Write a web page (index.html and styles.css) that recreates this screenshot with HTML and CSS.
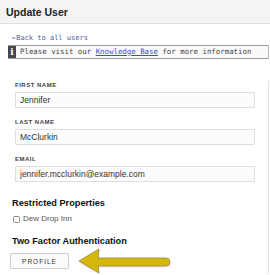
FILE: index.html
```html
<!DOCTYPE html>
<html lang="en">
<head>
    <meta charset="UTF-8">
    <meta name="viewport" content="width=device-width, initial-scale=1.0">
    <title>Update User</title>
    <link rel="stylesheet" href="styles.css">
</head>
<body>
    <div class="page-header">
        <h1>Update User</h1>
    </div>

    <div class="content">
        <a class="back-link" href="#">&larr;Back to all users</a>

        <div class="alert">
            <span class="alert-icon">i</span>
            <span class="alert-text">Please visit our <a href="#">Knowledge Base</a> for more information</span>
        </div>

        <form class="user-form">
            <div class="form-group">
                <label for="firstName">First Name</label>
                <input type="text" id="firstName" value="Jennifer">
            </div>
            <div class="form-group">
                <label for="lastName">Last Name</label>
                <input type="text" id="lastName" value="McClurkin">
            </div>
            <div class="form-group">
                <label for="email">Email</label>
                <input type="email" id="email" value="jennifer.mcclurkin@example.com">
            </div>

            <h3 class="section-title">Restricted Properties</h3>
            <label class="check-row">
                <input type="checkbox" class="check">
                <span>Dew Drop Inn</span>
            </label>

            <h3 class="section-title two-factor">Two Factor Authentication</h3>
            <div class="button-row">
                <button type="button" class="btn">Profile</button>
                <!-- callout arrow pointing at the button -->
                <svg class="callout-arrow" width="96" height="26" viewBox="0 0 96 26">
                    <defs>
                        <filter id="glow" x="-10%" y="-30%" width="120%" height="160%">
                            <feGaussianBlur stdDeviation="1.2"/>
                        </filter>
                    </defs>
                    <path d="M2,14 L22,2 L21,11 L89,11 A4,4 0 0 1 89,19 L21,19 L22,26 Z" fill="#f2a6d2" opacity="0.55" filter="url(#glow)"/>
                    <path d="M2,13 L22,1 L21,10 L89,10 A4,4 0 0 1 89,18 L21,18 L22,25 Z" fill="#d6b70c" stroke="#8f8c3e" stroke-width="0.8" stroke-linejoin="round"/>
                </svg>
            </div>
        </form>
    </div>
</body>
</html>
```

FILE: styles.css
```css
body {
    font-family: "Liberation Sans", Arial, sans-serif;
    background-color: #fff;
    color: #222;
    margin: 0;
    padding: 0;
}
.page-header {
    height: 23px;
    padding: 0 6px;
    display: flex;
    align-items: center;
    background-color: #f4f4f4;
    border-bottom: 1px solid #e0e0e0;
}
.page-header h1 {
    margin: 0;
    font-size: 10.5px;
    font-weight: bold;
    color: #222;
}
.content {
    padding: 0 1px 0 8px;
}
.back-link {
    display: block;
    margin-top: 10px;
    padding-left: 4px;
    font-family: "DejaVu Sans Mono", monospace;
    font-size: 7px;
    line-height: 8px;
    color: #4b56a6;
    text-decoration: none;
}
.alert {
    margin-top: 3px;
    display: flex;
    height: 14px;
    box-sizing: border-box;
    border-top: 1px solid #9c9c9c;
    border-bottom: 1px solid #9c9c9c;
    border-right: 1px solid #b8b8b8;
    background-color: #fafafa;
}
.alert-icon {
    width: 8px;
    background-color: #474747;
    color: #fff;
    font-family: "DejaVu Serif", serif;
    font-weight: bold;
    font-size: 9px;
    line-height: 12px;
    text-align: center;
}
.alert-text {
    padding-left: 4px;
    font-family: "DejaVu Sans Mono", monospace;
    font-size: 7.4px;
    line-height: 12px;
    color: #444;
    white-space: nowrap;
    overflow: hidden;
}
.alert-text a {
    color: #3b53bd;
}
.user-form {
    margin-top: 22px;
    border-right: 1px solid #e6e6e6;
}
.form-group {
    padding-left: 7px;
    margin-bottom: 10px;
}
.form-group label {
    display: block;
    margin-bottom: 3px;
    font-size: 6px;
    line-height: 8px;
    font-weight: bold;
    letter-spacing: 0.5px;
    text-transform: uppercase;
    color: #444;
}
.form-group input {
    display: block;
    width: 240px;
    height: 16px;
    box-sizing: border-box;
    margin: 0;
    padding: 0 4px;
    border: 1px solid #dedede;
    border-radius: 1px;
    background-color: #fcfcfc;
    font-family: "Liberation Sans", Arial, sans-serif;
    font-size: 8.5px;
    color: #333;
}
.section-title {
    margin: 16px 0 0;
    padding-left: 4px;
    font-size: 9.2px;
    line-height: 11px;
    font-weight: bold;
    color: #111;
}
.check-row {
    margin-top: 5px;
    padding-left: 5px;
    display: flex;
    align-items: center;
    gap: 3px;
    font-size: 8px;
    line-height: 10px;
    color: #555;
}
.check {
    appearance: none;
    width: 7px;
    height: 7px;
    margin: 0;
    border: 1px solid #8c8c8c;
    border-radius: 1.5px;
    background-color: #fff;
}
.two-factor {
    margin-top: 12px;
}
.button-row {
    margin-top: 1px;
    padding-left: 2px;
    display: flex;
    align-items: center;
    gap: 8px;
}
.btn {
    width: 59px;
    height: 16px;
    padding: 0;
    border: 1px solid #cfcfcf;
    border-radius: 1px;
    background-color: #fbfbfb;
    font-family: "Liberation Sans", Arial, sans-serif;
    font-size: 6.5px;
    letter-spacing: 1px;
    text-transform: uppercase;
    color: #333;
}
.callout-arrow {
    display: block;
}
```
